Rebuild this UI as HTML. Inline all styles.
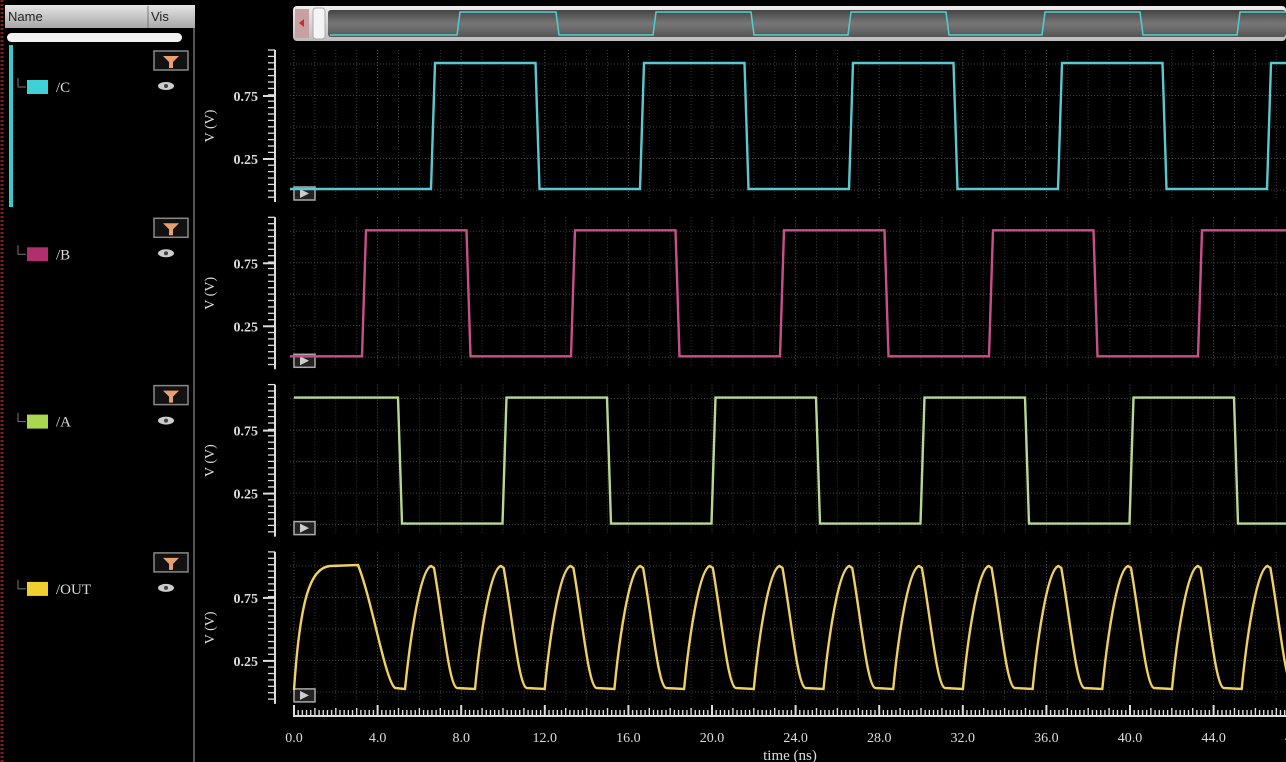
<!DOCTYPE html>
<html><head><meta charset="utf-8"><style>
html,body{margin:0;padding:0;background:#000;width:1286px;height:762px;overflow:hidden;font-family:"Liberation Serif",serif}
svg{position:absolute;left:0;top:0}
</style></head><body>
<svg id="s" width="1286" height="762" viewBox="0 0 1286 762" xmlns="http://www.w3.org/2000/svg">
<defs>
<linearGradient id="hg" x1="0" y1="0" x2="0" y2="1"><stop offset="0" stop-color="#e4e4e4"/><stop offset="1" stop-color="#a8a8a8"/></linearGradient>
<linearGradient id="tb" x1="0" y1="0" x2="0" y2="1"><stop offset="0" stop-color="#eeeeee"/><stop offset="1" stop-color="#bdbdbd"/></linearGradient>
<linearGradient id="ti" x1="0" y1="0" x2="0" y2="1"><stop offset="0" stop-color="#444"/><stop offset="0.5" stop-color="#777"/><stop offset="1" stop-color="#555"/></linearGradient>
</defs>
<rect width="1286" height="762" fill="#000"/>
<line x1="2" y1="0" x2="2" y2="762" stroke="#8a1a1a" stroke-width="3" stroke-dasharray="2 2"/>
<rect x="5" y="5" width="190" height="23" fill="url(#hg)"/>
<line x1="148" y1="6" x2="148" y2="28" stroke="#777"/>
<text x="8" y="21" font-family="Liberation Sans" font-size="13" fill="#222">Name</text>
<text x="151" y="21" font-family="Liberation Sans" font-size="13" fill="#222">Vis</text>
<rect x="7" y="33" width="175" height="9" rx="4.5" fill="#f2f2f2"/>
<line x1="194" y1="28" x2="194" y2="762" stroke="#555" stroke-width="2"/>
<rect x="9" y="45" width="4" height="162" fill="#3cc8c8"/>
<g id="rows"></g>
<rect x="293" y="6" width="993" height="35" rx="4" fill="url(#tb)"/>
<rect x="295" y="9" width="14" height="29" fill="#c9a0a0"/>
<polygon points="299,23 304,19 304,27" fill="#c03030"/>
<rect x="313" y="8" width="12" height="31" rx="3" fill="#f4f4f4" stroke="#aaa"/>
<rect x="328" y="10" width="958" height="27" rx="3" fill="url(#ti)"/>
<polyline fill="none" stroke="#4fd0d0" stroke-width="1.5" points="330,35 457,35 460,12 556,12 559,35 653,35 656,12 751,12 754,35 848,35 851,12 946,12 949,35 1042,35 1045,12 1140,12 1143,35 1237,35 1240,12 1286,12"/>
<g id="plots"></g>
<line x1="293" y1="716" x2="1286" y2="716" stroke="#ddd" stroke-width="2"/>
<g id="xt"></g>
<text x="790" y="760" font-size="15" fill="#ddd" text-anchor="middle">time (ns)</text>
</svg>
<script>
var NS="http://www.w3.org/2000/svg";
function el(p,t,a,txt){var e=document.createElementNS(NS,t);for(var k in a)e.setAttribute(k,a[k]);if(txt!=null)e.textContent=txt;p.appendChild(e);return e;}
var rows=document.getElementById('rows'),plots=document.getElementById('plots'),xt=document.getElementById('xt');
var names=['/C','/B','/A','/OUT'],cols=['#40d0d8','#b0306e','#a8d850','#f0d030'],wcol=['#5ac8d0','#c8508a','#b8d890','#f0d060'];
for(var i=0;i<4;i++){
 var d=i*167.3;
 el(rows,'rect',{x:154,y:51+d,width:34,height:19,fill:'#111',stroke:'#888','stroke-width':1.5});
 el(rows,'path',{d:'M163 '+(56+d)+' L179 '+(56+d)+' L173 '+(62+d)+' L173 '+(68+d)+' L169 '+(68+d)+' L169 '+(62+d)+' Z',fill:'#e8a070'});
 el(rows,'ellipse',{cx:166,cy:86+d,rx:8,ry:4,fill:'#ccc'});
 el(rows,'circle',{cx:166,cy:86+d,r:2,fill:'#444'});
 el(rows,'path',{d:'M18 '+(78+d)+' L18 '+(87+d)+' L26 '+(87+d),stroke:'#777',fill:'none'});
 el(rows,'rect',{x:27,y:80+d,width:21,height:14,fill:cols[i]});
 el(rows,'text',{x:56,y:92+d,'font-size':15,fill:'#ddd'},names[i]);
 var g=el(plots,'g',{});
 for(var x=294;x<1286;x+=20.9){var maj=(Math.round((x-294)/20.9)%4==0);
  el(g,'line',{x1:x,y1:50+d,x2:x,y2:200+d,stroke:maj?'#555':'#3a3a3a','stroke-width':1,'stroke-dasharray':'1 2'});}
 for(var y=64;y<=200;y+=31.5){el(g,'line',{x1:290,y1:y+d,x2:1286,y2:y+d,stroke:'#444','stroke-dasharray':'1 2'});}
 el(g,'line',{x1:275,y1:50+d,x2:275,y2:202+d,stroke:'#ddd','stroke-width':2});
 for(var y=50;y<=202;y+=6.4){el(g,'line',{x1:268,y1:y+d,x2:275,y2:y+d,stroke:'#ddd','stroke-width':1.3});}
 el(g,'line',{x1:263,y1:96+d,x2:275,y2:96+d,stroke:'#ddd','stroke-width':2});
 el(g,'line',{x1:263,y1:159+d,x2:275,y2:159+d,stroke:'#ddd','stroke-width':2});
 el(g,'text',{x:258,y:101+d,'font-size':14,fill:'#ddd','text-anchor':'end','font-weight':'bold'},'0.75');
 el(g,'text',{x:258,y:164+d,'font-size':14,fill:'#ddd','text-anchor':'end','font-weight':'bold'},'0.25');
 el(g,'text',{x:0,y:0,'font-size':14,fill:'#ddd','text-anchor':'middle',transform:'translate(214,'+(126+d)+') rotate(-90)'},'V (V)');
 el(g,'rect',{x:294,y:187+d,width:21,height:13,fill:'#222',stroke:'#aaa','stroke-width':1.5});
 el(g,'polygon',{points:(300)+','+(189+d)+' '+(309)+','+(193.5+d)+' '+(300)+','+(198+d),fill:'#ccc'});
}
function P(pts,dy){return pts.map(function(p,j){return (j?'L':'M')+p[0]+','+(p[1]+dy);}).join(' ');}
function sq(start,lowFirst,hi,lo,end){var pts=[[290,lowFirst?lo:hi]];var x=start,h=!lowFirst;while(x<end){pts.push([x,h?hi:lo]);pts.push([x+4,h?lo:hi]);h=!h;x+=104.5;}pts.push([end,h?hi:lo]);return pts;}
el(plots,'path',{d:P(sq(431,true,63,189,1286),0),stroke:wcol[0],fill:'none','stroke-width':2.4});
el(plots,'path',{d:P(sq(362,true,63,189,1286),167.3),stroke:wcol[1],fill:'none','stroke-width':2.4});
el(plots,'path',{d:P(sq(398,false,63,189,1286),334.6).replace('M290','M294'),stroke:wcol[2],fill:'none','stroke-width':2.4});
var o='M294,690 C300,600 310,568 330,566 L358,565 C372,600 385,680 395,688 L405,689';
for(var k=0;k<13;k++){var x0=405+69.7*k;
 o+=' C'+(x0+5)+',640 '+(x0+15)+',570 '+(x0+26)+',566 L'+(x0+29)+',568 C'+(x0+38)+',620 '+(x0+44)+',686 '+(x0+52)+',688 L'+(x0+70)+',689';}
el(plots,'path',{d:o,stroke:wcol[3],fill:'none','stroke-width':2.4});
for(var x=294,n=0;x<1286;x+=4.18,n++){var big=n%20==0,mid=n%5==0;
 el(xt,'line',{x1:x,y1:716,x2:x,y2:big?705:(mid?708:710),stroke:'#ddd','stroke-width':big?2:1.4});}
for(var t=0;t<=48;t+=4){el(xt,'text',{x:294+t*20.9,y:742,'font-size':14,fill:'#ddd','text-anchor':'middle'},t.toFixed(1));}
</script>
</body></html>
